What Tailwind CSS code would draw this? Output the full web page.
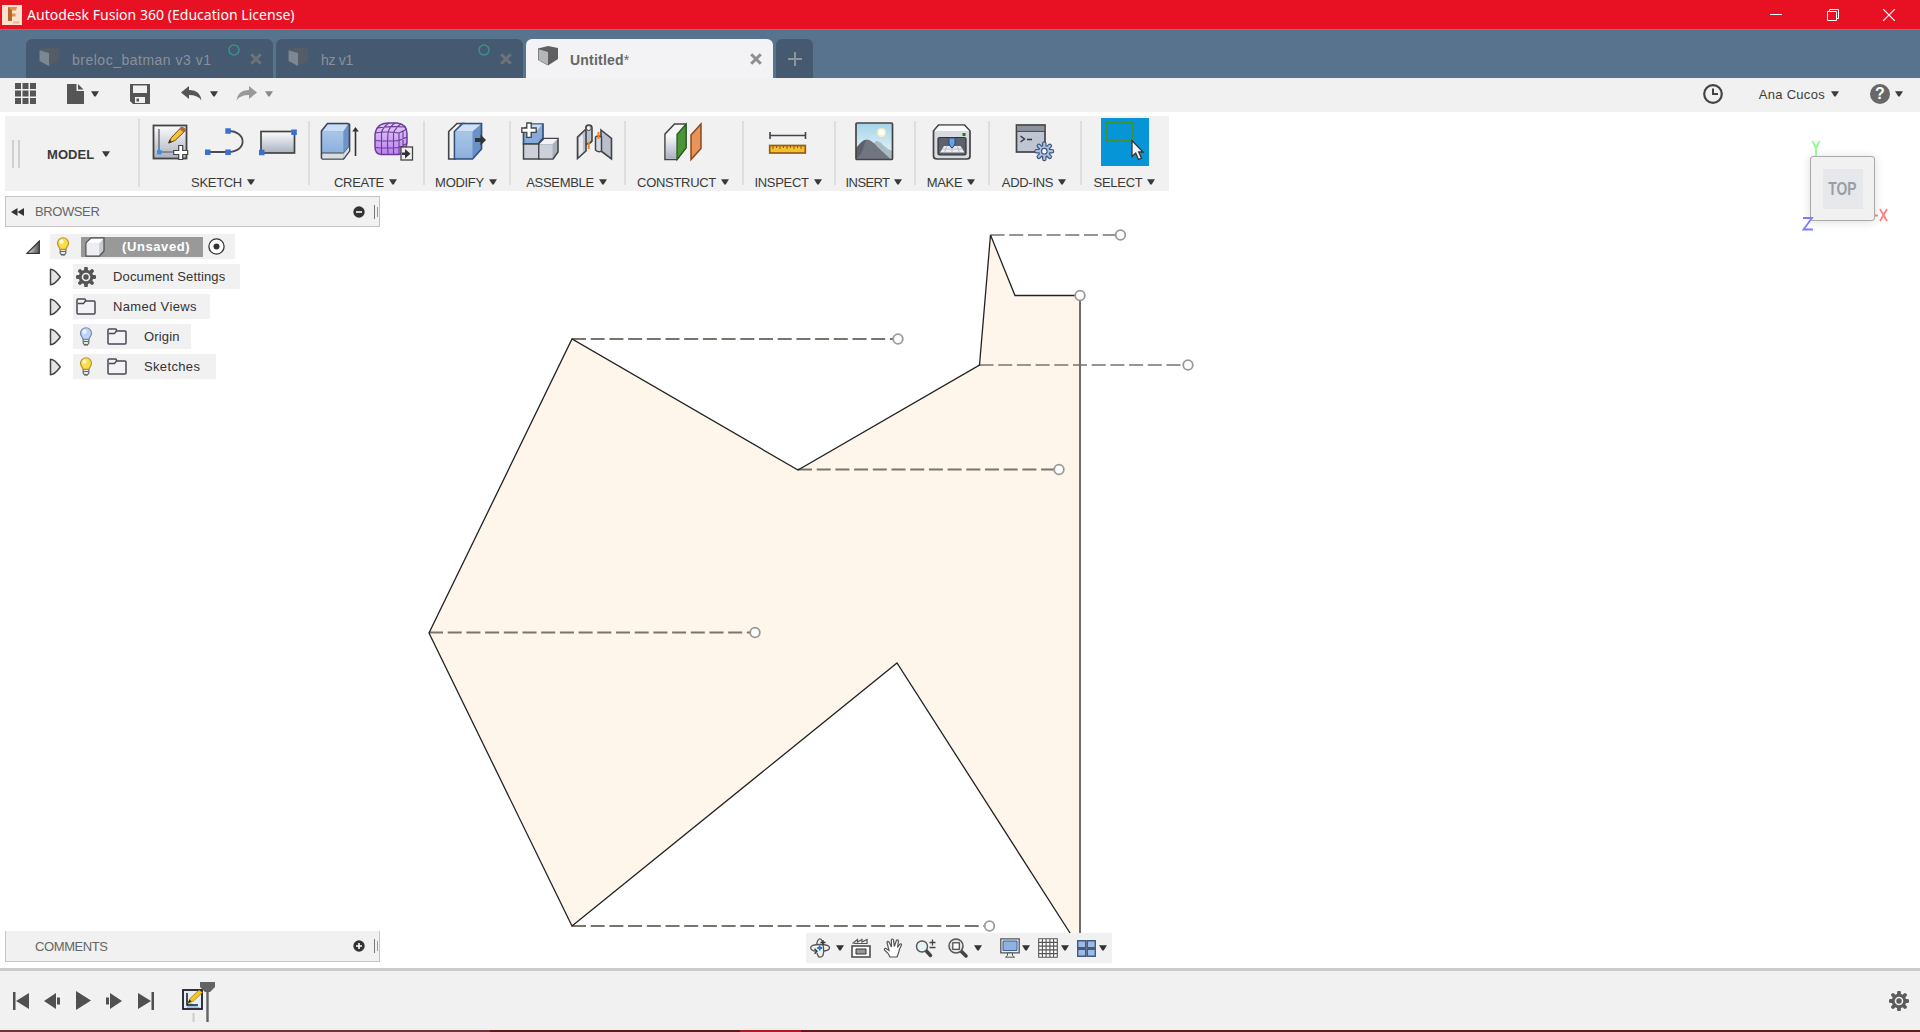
<!DOCTYPE html>
<html lang="en">
<head>
<meta charset="utf-8">
<title>Autodesk Fusion 360 (Education License)</title>
<script src="https://cdn.jsdelivr.net/npm/@tailwindcss/browser@4"></script>
</head>
<body class="w-[1920px] h-[1032px] overflow-hidden bg-white font-['Liberation_Sans',Arial,sans-serif] text-[13px] leading-none text-[#3c3c3c] flex flex-col">

<svg class="absolute w-0 h-0">
  <defs>
    <linearGradient id="silver" x1="0" y1="0" x2="0" y2="1"><stop offset="0" stop-color="#fdfdfd"/><stop offset="1" stop-color="#a9b0c0"/></linearGradient>
    <linearGradient id="blue" x1="0" y1="0" x2="0" y2="1"><stop offset="0" stop-color="#a9c6e8"/><stop offset="1" stop-color="#8db0dc"/></linearGradient>
    <linearGradient id="sky" x1="0" y1="0" x2="0" y2="1"><stop offset="0" stop-color="#a5d4ea"/><stop offset="1" stop-color="#eef6f8"/></linearGradient>
    <linearGradient id="violet" x1="0" y1="0" x2="0" y2="1"><stop offset="0" stop-color="#e3cdf8"/><stop offset="1" stop-color="#bb80f2"/></linearGradient>
    <linearGradient id="fade" x1="0" y1="0" x2="1" y2="0"><stop offset="0" stop-color="#e8e8e8"/><stop offset="1" stop-color="#555"/></linearGradient>
    <symbol id="caret" viewBox="0 0 8 6"><path d="M0 .3h8L4.700 5.600H3.300z" fill="currentColor"/></symbol>
    <symbol id="cross" viewBox="0 0 12 12"><path d="M1.200 1.200l9.600 9.600M10.800 1.200l-9.600 9.600" stroke="currentColor" stroke-width="3"/></symbol>
    <symbol id="cube" viewBox="0 0 20 20"><path d="M0 2.500L10 0l10 2v11l-10 6.500L0 14z" fill="var(--side)"/><path d="M.6 3.200L10 6v13L.6 14z" fill="var(--face)"/></symbol>
    <symbol id="gear" viewBox="0 0 20 20"><path d="M10 1.500v17M1.500 10h17M4 4l12 12M16 4L4 16" stroke="currentColor" stroke-width="3.800" stroke-linecap="round"/><circle cx="10" cy="10" r="5.800" fill="#f1f1f1" stroke="currentColor" stroke-width="3"/><circle cx="10" cy="10" r="2.700" fill="currentColor"/></symbol>
    <symbol id="bulb" viewBox="0 0 14 20"><path d="M4 12h6v5l-1.500 2h-3L4 17z" fill="#e6e6e6" stroke="#666" stroke-width="1.200"/><path d="M7 .8a5.800 5.800 0 0 1 5.800 5.700c0 3.200-2.300 4-2.800 6.500H4C3.500 10.500 1.200 9.700 1.200 6.500A5.800 5.800 0 0 1 7 .8z" fill="var(--glow)" stroke="var(--rim)" stroke-width="1.200"/><circle cx="5.500" cy="5" r="2.300" fill="#fff" fill-opacity=".75"/><path d="M4 15.300h6M5 18.500h4" stroke="#666" stroke-width="1.200"/></symbol>
    <symbol id="folder" viewBox="0 0 20 17"><path d="M1 15V2q0-1 1-1h6.500q1 0 1 1v1H18q1 0 1 1v11q0 1-1 1H2q-1 0-1-1z" fill="#f3f3f6" stroke="#454a55" stroke-width="1.500"/><path d="M2 5.500h5.500L9.500 3" fill="none" stroke="#454a55" stroke-width="1.300"/></symbol>
    <symbol id="twist" viewBox="0 0 13 18"><path d="M1.500 1.200q4 0 9.800 7.800-5.800 7.800-9.800 7.800z" fill="#e4e4e4" stroke="#444" stroke-width="1.500" stroke-linejoin="round"/></symbol>
  </defs>
</svg>

<!-- Title bar -->
<header class="h-[29px] shrink-0 bg-[#e81123] text-white flex items-center pl-[2px] pr-[25px]">
  <svg class="w-5 h-5" viewBox="0 0 20 20"><rect width="20" height="20" fill="#fbe3d0"/><path d="M6 2h9l-1 3.500h-4v3h3.500v3H10v4H6z" fill="#e0914a"/><path d="M6 2l4 3.500v10.500H6z" fill="#b4682a"/><path d="M11 17.500h6" stroke="#efb98a" stroke-width="2"/></svg>
  <span class="ml-[5px] font-['Noto_Sans','Open_Sans',sans-serif] text-[14px] tracking-[0.03px] whitespace-nowrap">Autodesk Fusion 360 (Education License)</span>
  <div class="ml-auto flex items-center gap-[44.500px]">
    <svg class="w-3 h-3" viewBox="0 0 12 12"><path d="M0 5.500h12" stroke="#fff"/></svg>
    <svg class="w-3 h-3" viewBox="0 0 12 12" fill="none" stroke="#fff"><path d="M.5 2.500h9v9h-9zM2.500 2.500v-2h9v9h-2"/></svg>
    <svg class="w-3 h-3" viewBox="0 0 12 12"><path d="M0 0l12 12M12 0L0 12" stroke="#fff" stroke-width="1.200"/></svg>
  </div>
</header>

<!-- Document tabs -->
<nav class="h-[49px] shrink-0 bg-[#57738d] border-t border-[#6b8299] flex items-end gap-[3px] pl-[26px] text-[14px] text-[#8a9199]">
  <div class="relative w-[247px] h-[39px] rounded-t-md bg-[#455a70] flex items-center pl-[13px] pr-[11px]">
    <svg class="w-5 h-5 -mt-1 [--side:#545c66] [--face:#7a8794]"><use href="#cube"/></svg>
    <span class="ml-[13px] mt-[2px] tracking-[0.5px]">breloc_batman v3 v1</span>
    <svg class="absolute left-[202px] top-[5px] w-3 h-3" viewBox="0 0 12 12"><circle cx="6" cy="6" r="5" fill="none" stroke="#3b8f8c" stroke-width="1.600"/></svg>
    <svg class="w-3 h-3 ml-auto text-[#6e7378]"><use href="#cross"/></svg>
  </div>
  <div class="relative w-[247px] h-[39px] rounded-t-md bg-[#455a70] flex items-center pl-[12px] pr-[11px]">
    <svg class="w-5 h-5 -mt-1 [--side:#545c66] [--face:#7a8794]"><use href="#cube"/></svg>
    <span class="ml-[13px] mt-[2px] tracking-[-0.3px]">hz v1</span>
    <svg class="absolute left-[202px] top-[5px] w-3 h-3" viewBox="0 0 12 12"><circle cx="6" cy="6" r="5" fill="none" stroke="#3b8f8c" stroke-width="1.600"/></svg>
    <svg class="w-3 h-3 ml-auto text-[#6e7378]"><use href="#cross"/></svg>
  </div>
  <div class="w-[247px] h-[39px] rounded-t-md bg-[#f3f3f5] flex items-center pl-[12px] pr-[11px]">
    <svg class="w-5 h-5 -mt-1.5 [--side:#5f5f5f] [--face:#b4b7ba]"><use href="#cube"/></svg>
    <span class="ml-[12px] mt-[2px] font-bold text-[#666] tracking-[0.2px]">Untitled<span class="font-normal">*</span></span>
    <svg class="w-3 h-3 ml-auto text-[#8f8f8f]"><use href="#cross"/></svg>
  </div>
  <div class="w-[37px] h-[39px] rounded-t-md bg-[#455a70] flex items-center justify-center">
    <svg class="w-[14px] h-[14px]" viewBox="0 0 14 14"><path d="M7 0v14M0 7h14" stroke="#8d949b" stroke-width="2"/></svg>
  </div>
</nav>

<!-- Quick access bar -->
<div class="h-[34px] shrink-0 bg-[#f1f1f1] flex items-center pl-[15px] pr-[17px] pb-[3px]">
  <svg class="w-[21px] h-[21px]" viewBox="0 0 21 21"><path d="M0 0h6v6H0zM7.500 0h6v6h-6zM15 0h6v6h-6zM0 7.500h6v6H0zM7.500 7.500h6v6h-6zM15 7.500h6v6h-6zM0 15h6v6H0zM7.500 15h6v6h-6zM15 15h6v6h-6z" fill="#555"/></svg>
  <svg class="w-[17px] h-5 ml-[31px]" viewBox="0 0 17 20"><path d="M0 0h9.500v7H17v13H0z" fill="#555"/><path d="M11 0l5.500 5.500H11z" fill="#555"/></svg>
  <svg class="w-2 h-[6px] ml-[7px]"><use href="#caret"/></svg>
  <svg class="w-5 h-5 ml-[31px]" viewBox="0 0 20 20"><path d="M0 0h20v20H3l-3-3z" fill="#555"/><path d="M3 1.500h14V9H3z" fill="#f1f1f1"/><path d="M5 13h10v6H5z" fill="#f1f1f1"/><path d="M6.500 14.500h2.500v3H6.500z" fill="#555"/></svg>
  <svg class="w-[21px] h-[15px] ml-[31px] text-[#555]" viewBox="0 0 21 15"><path d="M0 6.500L8 0v4q11-.5 12.500 10.500Q17 9 8 9v4z" fill="currentColor"/></svg>
  <svg class="w-2 h-[6px] ml-[8px]"><use href="#caret"/></svg>
  <svg class="w-[21px] h-[15px] ml-[18px] text-[#999]" viewBox="0 0 21 15"><path d="M21 6.500L13 0v4Q2 3.500.5 14.500 4 9 13 9v4z" fill="currentColor"/></svg>
  <svg class="w-2 h-[6px] ml-[8px] text-[#8a8a8a]"><use href="#caret"/></svg>
  <svg class="w-5 h-5 ml-auto" viewBox="0 0 20 20"><circle cx="10" cy="10" r="8.800" fill="none" stroke="#444" stroke-width="2.200"/><path d="M10 4.500V10h5" fill="none" stroke="#444" stroke-width="2"/></svg>
  <span class="ml-9 mt-[1px] tracking-[0.3px]">Ana Cucos</span>
  <svg class="w-2 h-[6px] ml-[6px]"><use href="#caret"/></svg>
  <div class="ml-[31px] w-5 h-5 rounded-full bg-[#686868] text-white font-bold text-[16px] flex items-center justify-center">?</div>
  <svg class="w-2 h-[6px] ml-[5px]"><use href="#caret"/></svg>
</div>

<!-- Modeling workspace -->
<main class="relative h-[856px] shrink-0 bg-white">
  <svg class="absolute inset-0 w-full h-full" viewBox="0 112 1920 856">
    <path d="M572 339L798 470 979.500 365 990.500 235 1015 295.500H1080V940H1075L897 663 572 926 429 633z" fill="#fff6eb"/>
    <g stroke="#78756f" stroke-width="2" stroke-dasharray="14 4.700" fill="none">
      <path d="M572 339H893M798 469.500H1054M429 632.500H750M572 926H984"/>
      <path d="M990.500 235H1115M979.500 365H1182" stroke="#989490"/>
    </g>
    <path d="M1080 301V940" stroke="#6f6c69" stroke-width="2"/>
    <path d="M1074.500 940L897 663 572 926 429 633 572 339 798 470 979.500 365 990.500 235 1015 295.500H1075" fill="none" stroke="#222" stroke-width="1.300"/>
    <g fill="#fff" stroke="#999" stroke-width="1.800">
      <circle cx="1120.500" cy="235" r="4.800"/><circle cx="1080" cy="295.500" r="4.800"/><circle cx="1188" cy="365" r="4.800"/><circle cx="898" cy="339" r="4.800"/><circle cx="1059" cy="469.500" r="4.800"/><circle cx="755" cy="632.500" r="4.800"/><circle cx="989.500" cy="926" r="4.800"/>
    </g>
  </svg>

  <!-- View cube -->
  <div class="absolute left-[1810px] top-[44px] w-[65px] h-[65px] rounded-[3px] border-[1.500px] border-[#a9a9a9] bg-[#f1f1f1] shadow-[0_1px_10px_rgba(0,0,0,0.14)] flex items-center justify-center">
    <div class="w-10 h-10 bg-[#e6e8ec] flex items-center justify-center font-bold text-[#9a9ea6]"><span class="scale-x-[0.77] text-[18px]">TOP</span></div>
  </div>
  <svg class="absolute left-[1799px] top-[26px] w-[92px] h-[108px]" viewBox="0 0 92 108" fill="none" stroke-width="1.800">
    <path d="M13.500 3l3.500 7 3.500-7M17 10v8" stroke="#8dfb8d"/>
    <path d="M4 80h9L4.500 91.500H14" stroke="#7b7bff"/>
    <path d="M81 71l7 12M88 71l-7 12M76 77.500h3" stroke="#ff8080"/>
  </svg>

  <!-- Ribbon -->
  <section class="relative h-[79px] pt-1 pl-[5px] flex text-[#3a3a3a]">
    <div class="h-[75px] bg-[#f1f1f1] flex items-start tracking-[-0.3px]">
      <div class="w-[133px] h-[75px] flex items-center pl-[7px]">
        <div class="flex gap-1"><i class="w-[2px] h-7 bg-[#d0d0d0]"></i><i class="w-[2px] h-7 bg-[#d0d0d0]"></i></div>
        <span class="ml-[27px] mt-[1px] font-bold tracking-[0.05px]">MODEL</span>
        <svg class="w-2 h-[6px] ml-[8px]"><use href="#caret"/></svg>
      </div>
      <i class="w-[2px] h-[68px] mt-[3px] -mr-[2px] bg-[#dedede]"></i>

      <div class="w-[170px] pt-[2px] flex flex-col items-center">
        <div class="flex gap-[6px] translate-x-[1px]">
          <svg class="size-12" viewBox="0 0 48 48"><rect x="7.500" y="7.500" width="33" height="33" fill="url(#silver)" stroke="#444" stroke-width="1.800"/><path d="M13 11v23h18" fill="none" stroke="#555" stroke-width="1.200"/><rect x="11" y="32" width="4.500" height="4.500" fill="#3b8fe8"/><path d="M23 25l2-5L35.500 9l4 3.500L29 22.500z" fill="#f8c332" stroke="#6b4a18"/><path d="M33.500 11l4 3.500 2.500-2.500q-1-3.500-4.500-3z" fill="#a86a48"/><path d="M22 25.500l1.500-4 2.500 2.500z" fill="#333"/><path d="M32.700 27.500h4v5h5v4h-5v5h-4v-5h-5v-4h5z" fill="#fff" stroke="#444" stroke-width="1.200"/></svg>
          <svg class="size-12" viewBox="0 0 48 48"><path d="M7.500 34H28c19.500 0 19.500-21 0-21" fill="none" stroke="#4c4c4c" stroke-width="1.800"/><path d="M5 31.500h5.500V37H5zM25.300 31.500h5.500V37h-5.500zM25.300 10.300h5.500v5.500h-5.500z" fill="#3a6fd0"/></svg>
          <svg class="size-12" viewBox="0 0 48 48"><rect x="7" y="13.500" width="33.500" height="21.500" fill="url(#silver)" stroke="#444" stroke-width="1.700"/><path d="M37.300 11.500h5.500V17h-5.500zM5 31.800h5.500v5.500H5z" fill="#3a6fd0"/></svg>
        </div>
        <div class="flex items-center gap-[5px] mt-[10px]"><span>SKETCH</span><svg class="w-2 h-[6px] -mt-0.5"><use href="#caret"/></svg></div>
      </div>
      <i class="w-[2px] h-[64px] mt-[5px] -mr-[2px] bg-[#dedede]"></i>

      <div class="w-[115px] pt-[2px] flex flex-col items-center">
        <div class="flex gap-[6px]">
          <svg class="size-12" viewBox="0 0 48 48"><path d="M6.500 13l6-7.500h20.500l1.500 1V33l-6 8H7.500l-1-1z" fill="#6e93c6" stroke="#3d4656" stroke-width="1.700"/><path d="M7.300 13.500l5.500-7h20l-4.500 7z" fill="#c9def2"/><path d="M7.300 13.500h21V34h-21z" fill="url(#blue)"/><path d="M7.300 35.500h21v5h-21zM28.500 35.500l5.500-7v4.500l-5.500 7z" fill="#ddd"/><path d="M7 35h21.500l6-7" fill="none" stroke="#555" stroke-width=".8"/><path d="M40.500 38V11" stroke="#333" stroke-width="1.600"/><path d="M37.200 13.500l3.300-4.500 3.300 4.500z" fill="#333"/></svg>
          <svg class="size-12" viewBox="0 0 48 48"><path d="M6 17Q7 5 20 5h8q10 1 10 11v9q-1 9-8 11.500H12Q6 36 6 29z" fill="url(#violet)" stroke="#6b3d94" stroke-width="1.500"/><path d="M6 15q11-2 24 0v21M30 15l8-4M12.500 14.500V36M19 14.500q-1 11 0 22M24.500 14.500V36M6 22.500q12 1 24 0l8-3.500M6 29.500q12 1 24 0l8-4M12.500 14.500Q14 9 20 5M19 14.500Q21 8 26 5M24.500 15Q27 9 32 6M8 10q14-2 28-1M34 13v20" fill="none" stroke="#6b3d94" stroke-width="1.100"/><rect x="32" y="29" width="11.500" height="13" fill="#f1f1f1" stroke="#444" stroke-width="1.300"/><path d="M33 34.500h3V31l5.500 4.700L36 40.500V37h-3z" fill="#333"/></svg>
        </div>
        <div class="flex items-center gap-[5px] mt-[10px]"><span>CREATE</span><svg class="w-2 h-[6px] -mt-0.5"><use href="#caret"/></svg></div>
      </div>
      <i class="w-[2px] h-[64px] mt-[5px] -mr-[2px] bg-[#dedede]"></i>

      <div class="w-[86px] pt-[2px] flex flex-col items-center">
        <svg class="size-12" viewBox="0 0 48 48"><path d="M6.700 13.500L15 5.500h6l-8 8v27.500H6.700z" fill="#f2f2f2" stroke="#444" stroke-width="1.600"/><path d="M12.500 13.500l8-8h19V31l-9 10h-18z" fill="#6b92c8" stroke="#35507c" stroke-width="1.700"/><path d="M13.500 13.500L21 6.500h17.500l-8 7z" fill="#cfe2f4"/><path d="M13.300 13.500h17.200V40H13.300z" fill="url(#blue)"/><path d="M33 20h5.500v-3.500L44 22l-5.500 5.500V24H33z" fill="#333"/></svg>
        <div class="flex items-center gap-[5px] mt-[10px]"><span>MODIFY</span><svg class="w-2 h-[6px] -mt-0.5"><use href="#caret"/></svg></div>
      </div>
      <i class="w-[2px] h-[64px] mt-[5px] -mr-[2px] bg-[#dedede]"></i>

      <div class="w-[115px] pt-[2px] flex flex-col items-center">
        <div class="flex gap-[6px]">
          <svg class="size-12" viewBox="0 0 48 48"><path d="M7.500 12l6-6h13.500v14l-5 6H7.500z" fill="#86abd9" stroke="#35507c" stroke-width="1.700"/><path d="M8 12l6-5.500h12l-4.500 5.500z" fill="#c9def2"/><path d="M7.500 26h15.500v15H7.500z" fill="#ccd0d8" stroke="#444" stroke-width="1.500"/><path d="M23 26l5-5.500h14V34l-5 7H23z" fill="#a9b0bd" stroke="#444" stroke-width="1.600"/><path d="M23.500 26l5-5h13l-5 5z" fill="#f1f3f5"/><path d="M23.500 26.500H36.500V40.300H23.500z" fill="#ccd0d8"/><path d="M10.800 5h4.400v5h5v4.400h-5v5h-4.400v-5h-5V10h5z" fill="#fff" stroke="#444" stroke-width="1.300"/></svg>
          <svg class="size-12" viewBox="0 0 48 48"><path d="M7.500 19l8.500-8v22l-8.500 7.500zM16 11q-1-4 3-4 3 0 3 3v13q-2 3-6 3z" fill="#b9c0cb" stroke="#444" stroke-width="1.600"/><path d="M9 20l4-4v18l-4 4z" fill="#e6e9ee"/><circle cx="18.700" cy="10" r="2.500" fill="#eee" stroke="#444"/><path d="M31 12l10.500 8.500V41L31 33z" fill="#b9c0cb" stroke="#444" stroke-width="1.600"/><path d="M25.500 19q2.500-2 6 0v14q-3 2-6-1z" fill="#d5d9e0" stroke="#444" stroke-width="1.500"/><path d="M18.700 24v7M28.500 14v7" stroke="#f08020" stroke-width="2"/></svg>
        </div>
        <div class="flex items-center gap-[5px] mt-[10px]"><span>ASSEMBLE</span><svg class="w-2 h-[6px] -mt-0.5"><use href="#caret"/></svg></div>
      </div>
      <i class="w-[2px] h-[64px] mt-[5px] -mr-[2px] bg-[#dedede]"></i>

      <div class="w-[118px] pt-[2px] flex flex-col items-center">
        <svg class="size-12" viewBox="0 0 48 48"><path d="M6 16L15.500 6H27v23.500L18 41.500H6z" fill="#f6f6f8" stroke="#444" stroke-width="1.600"/><path d="M6.800 16.500H18V40.700H6.800z" fill="url(#silver)"/><path d="M18 16.500L27 6v24l-9 11.500z" fill="#4c9438" stroke="#2c5f20" stroke-width="1.300"/><path d="M32 17L42 6v24.500L32 41.500z" fill="#e8935a" stroke="#8c4a1c" stroke-width="1.500"/></svg>
        <div class="flex items-center gap-[5px] mt-[10px]"><span>CONSTRUCT</span><svg class="w-2 h-[6px] -mt-0.5"><use href="#caret"/></svg></div>
      </div>
      <i class="w-[2px] h-[64px] mt-[5px] -mr-[2px] bg-[#dedede]"></i>

      <div class="w-[92px] pt-[2px] flex flex-col items-center">
        <svg class="size-12" viewBox="0 0 48 48"><path d="M6 14v7M41.500 14v7M6 17.500h35.500" stroke="#444" stroke-width="1.600"/><rect x="5.700" y="27.500" width="35.600" height="7.500" fill="#f2c02e" stroke="#9a5a10" stroke-width="1.700"/><path d="M9 28v3M12.500 28v2M16 28v3M19.500 28v2M23 28v3M26.500 28v2M30 28v3M33.500 28v2M37 28v3" stroke="#8a5a10"/></svg>
        <div class="flex items-center gap-[5px] mt-[10px]"><span>INSPECT</span><svg class="w-2 h-[6px] -mt-0.5"><use href="#caret"/></svg></div>
      </div>
      <i class="w-[2px] h-[64px] mt-[5px] -mr-[2px] bg-[#dedede]"></i>

      <div class="w-[80px] pt-[2px] flex flex-col items-center">
        <svg class="size-12" viewBox="0 0 48 48"><rect x="6" y="5" width="36.500" height="36.500" fill="url(#sky)"/><circle cx="31.500" cy="14.500" r="4.500" fill="#fdf3b8"/><circle cx="31.500" cy="14.500" r="2.800" fill="#fff"/><path d="M6 36q14-5 20-13 4 0 7 4 4 4 9.500 6v9H6z" fill="#a9bcc6"/><path d="M6 30q6-8 10.500-8.500 5 0 11 7.500L41 41.500H6z" fill="#70757f"/><path d="M6 31q6-9 10-9l-2 6-3 8-5 5z" fill="#5b606b"/><rect x="6" y="5" width="36.500" height="36.500" rx="1" fill="none" stroke="#444" stroke-width="1.700"/></svg>
        <div class="flex items-center gap-[5px] mt-[10px] tracking-[-0.6px]"><span>INSERT</span><svg class="w-2 h-[6px] -mt-0.5"><use href="#caret"/></svg></div>
      </div>
      <i class="w-[2px] h-[64px] mt-[5px] -mr-[2px] bg-[#dedede]"></i>

      <div class="w-[74px] pt-[2px] flex flex-col items-center">
        <svg class="size-12" viewBox="0 0 48 48"><path d="M6.500 13l5-6h26l5.500 6v25q0 3-3 3h-30q-3.500 0-3.500-3z" fill="#d9dbe0" stroke="#444" stroke-width="1.700"/><path d="M7.500 13l4.500-5.200h25L42 13z" fill="#fafafa"/><rect x="35.500" y="15" width="3" height="3" fill="#118a11"/><rect x="11" y="19.500" width="28" height="17.500" rx="1.500" fill="#5d626c" stroke="#333" stroke-width="1.200"/><path d="M17 28h16.500l4 6.500H13z" fill="#eceef0"/><path d="M15 31h20.500M20 28l-2.500 6.500M25 28v6.500M30 28l2.500 6.500" stroke="#aab" stroke-width=".7"/><path d="M22 20h6v6l-2 3.500h-2L22 26z" fill="#6aa3e4" stroke="#234a86"/></svg>
        <div class="flex items-center gap-[5px] mt-[10px]"><span>MAKE</span><svg class="w-2 h-[6px] -mt-0.5"><use href="#caret"/></svg></div>
      </div>
      <i class="w-[2px] h-[64px] mt-[5px] -mr-[2px] bg-[#dedede]"></i>

      <div class="w-[92px] pt-[2px] flex flex-col items-center">
        <svg class="size-12" viewBox="0 0 48 48"><rect x="6.500" y="7" width="28.500" height="27" fill="#bfc5d2" stroke="#444" stroke-width="1.700"/><path d="M7.300 8h27v4.500h-27z" fill="#8d939e"/><path d="M7 13.300h28" stroke="#444" stroke-width="1.200"/><path d="M10.500 18l4 3-4 3M17 21.500h5" fill="none" stroke="#333" stroke-width="1.400"/><path d="M34.300 25.500v15.500M26.500 33.200h15.500M28.800 27.800l11 11M39.800 27.800l-11 11" stroke="#3f5678" stroke-width="4.500" stroke-linecap="round"/><path d="M34.300 25.500v15.500M26.500 33.200h15.500M28.800 27.800l11 11M39.800 27.800l-11 11" stroke="#a9c4e8" stroke-width="2.200" stroke-linecap="round"/><circle cx="34.300" cy="33.200" r="5" fill="#a9c4e8"/><circle cx="34.300" cy="33.200" r="2.800" fill="#fff" stroke="#3f5678" stroke-width="1.200"/></svg>
        <div class="flex items-center gap-[5px] mt-[10px]"><span>ADD-INS</span><svg class="w-2 h-[6px] -mt-0.5"><use href="#caret"/></svg></div>
      </div>
      <i class="w-[2px] h-[64px] mt-[5px] -mr-[2px] bg-[#dedede]"></i>

      <div class="w-[89px] pt-[2px] flex flex-col items-center">
        <svg class="size-12 bg-[#0696d7]" viewBox="0 0 48 48"><rect x="6" y="5" width="25.500" height="17.500" fill="none" stroke="#3f9238" stroke-width="2"/><path d="M31 22.500v16l3.700-3.500 2.800 6.500 3-1.300-2.800-6.200H42z" fill="#f4f4f4" stroke="#333" stroke-width="1.300"/></svg>
        <div class="flex items-center gap-[5px] mt-[10px]"><span>SELECT</span><svg class="w-2 h-[6px] -mt-0.5"><use href="#caret"/></svg></div>
      </div>
    </div>
  </section>

  <!-- Browser panel -->
  <section class="relative ml-[5px] mt-[5px] w-[375px] h-[31px] bg-[#f1f1f1] border border-[#c4c4c4] flex items-center pl-[5px]">
    <svg class="w-[13px] h-2" viewBox="0 0 13 8"><path d="M6.500 0v8L0 4zM13 0v8L6.500 4z" fill="#333"/></svg>
    <span class="ml-[11px] -mt-px text-[#666] tracking-[-0.4px]">BROWSER</span>
    <svg class="w-3 h-3 ml-auto" viewBox="0 0 12 12"><circle cx="6" cy="6" r="5.700" fill="#333"/><path d="M3 6h6" stroke="#fff" stroke-width="1.600"/></svg>
    <i class="ml-[9px] w-px h-[14px] bg-[#777]"></i><i class="ml-[2px] mr-px w-px h-[10px] bg-[#999]"></i>
  </section>

  <div class="relative mt-[7px] flex flex-col items-start gap-[5px] tracking-[0.15px] text-[#333]">
    <div class="flex items-center h-[25px] pl-[26px]">
      <svg class="w-[14px] h-[14px] mr-[10px]" viewBox="0 0 14 14"><path d="M13.300 1v12.300H1z" fill="url(#fade)" stroke="#333" stroke-width="1.200"/></svg>
      <div class="flex items-center w-[185px] h-[25px] bg-[#f1f1f1] pl-[6px]">
        <svg class="w-[14px] h-[19px] [--glow:#fbdc4a] [--rim:#b59420]"><use href="#bulb"/></svg>
        <div class="ml-[11px] w-[122px] h-5 bg-[#999] flex items-center pl-1 text-white font-bold">
          <svg class="w-5 h-5" viewBox="0 0 20 20"><path d="M1 6l5-5h13v13l-4.500 5H1z" fill="#c9ccd4" stroke="#555" stroke-width="1.300"/><path d="M1.700 6.300L6.300 1.700h12L14.500 6.300z" fill="#fff"/><path d="M1.700 6.300h12.500v12H1.700z" fill="#eeeff3"/></svg>
          <span class="ml-[17px] tracking-[0.6px]">(Unsaved)</span>
        </div>
        <svg class="ml-[5px] w-[17px] h-[17px]" viewBox="0 0 17 17"><circle cx="8.500" cy="8.500" r="7.600" fill="#fff" stroke="#333" stroke-width="1.300"/><circle cx="8.500" cy="8.500" r="3" fill="#333"/></svg>
      </div>
    </div>
    <div class="flex items-center h-[25px] pl-[49px]">
      <svg class="w-[13px] h-[18px] mr-[11px]"><use href="#twist"/></svg>
      <div class="flex items-center w-[167px] h-[25px] bg-[#f1f1f1] pl-[3px]"><svg class="w-5 h-5 text-[#555]"><use href="#gear"/></svg><span class="ml-[17px]">Document Settings</span></div>
    </div>
    <div class="flex items-center h-[25px] pl-[49px]">
      <svg class="w-[13px] h-[18px] mr-[11px]"><use href="#twist"/></svg>
      <div class="flex items-center w-[137px] h-[25px] bg-[#f1f1f1] pl-[3px]"><svg class="w-5 h-[17px]"><use href="#folder"/></svg><span class="ml-[17px] tracking-[0.35px]">Named Views</span></div>
    </div>
    <div class="flex items-center h-[25px] pl-[49px]">
      <svg class="w-[13px] h-[18px] mr-[11px]"><use href="#twist"/></svg>
      <div class="flex items-center w-[118px] h-[25px] bg-[#f1f1f1] pl-[6px]"><svg class="w-[14px] h-[19px] [--glow:#bcd4f8] [--rim:#7088b4]"><use href="#bulb"/></svg><svg class="w-5 h-[17px] ml-[14px]"><use href="#folder"/></svg><span class="ml-[17px]">Origin</span></div>
    </div>
    <div class="flex items-center h-[25px] pl-[49px]">
      <svg class="w-[13px] h-[18px] mr-[11px]"><use href="#twist"/></svg>
      <div class="flex items-center w-[143px] h-[25px] bg-[#f1f1f1] pl-[6px]"><svg class="w-[14px] h-[19px] [--glow:#fbdc4a] [--rim:#b59420]"><use href="#bulb"/></svg><svg class="w-5 h-[17px] ml-[14px]"><use href="#folder"/></svg><span class="ml-[17px] tracking-[0.35px]">Sketches</span></div>
    </div>
  </div>

  <!-- Comments panel -->
  <section class="absolute left-[5px] bottom-[6px] w-[375px] h-[31px] bg-[#f1f1f1] border border-t-0 border-[#c4c4c4] flex items-center pl-[29px]">
    <span class="text-[#666] tracking-[-0.4px]">COMMENTS</span>
    <svg class="w-3 h-3 ml-auto" viewBox="0 0 12 12"><circle cx="6" cy="6" r="5.700" fill="#333"/><path d="M3 6h6M6 3v6" stroke="#fff" stroke-width="1.600"/></svg>
    <i class="ml-[9px] w-px h-[14px] bg-[#777]"></i><i class="ml-[2px] mr-px w-px h-[10px] bg-[#999]"></i>
  </section>

  <!-- Navigation bar -->
  <div class="absolute left-[806px] bottom-[5px] w-[306px] h-[30px] bg-[#f1f1f1] flex items-center pl-[4px] text-[#333]">
    <svg class="w-5 h-5" viewBox="0 0 20 20" fill="none" stroke="#555" stroke-width="1.300"><path d="M13 13Q19.500 12.500 19.500 9.700 19.500 6.500 10 6.500T.7 9.700q0 3 5.500 3.500"/><path d="M6.500 7Q7.500.8 10 .8T13.500 10 10 19.200Q8 19.200 7 15"/><path d="M4.500 10.800l2.500 2.400-2.500 2.500M10.500 4.500h5M13 2v5" stroke="#333"/><path d="M9.700 7.500v5M7.200 10h5" stroke="#1878e0" stroke-width="1.800"/></svg>
    <svg class="w-2 h-[6px] ml-[6px]"><use href="#caret"/></svg>
    <svg class="w-5 h-5 ml-[7px]" viewBox="0 0 20 20"><path d="M1 8h18v11H1z" fill="#fff" stroke="#444" stroke-width="1.500"/><path d="M5 11h10v5H5z" fill="#9a9a9a" stroke="#333"/><path d="M1.500 5.500l5-4v2.500L11 1.500V4l5-2.500v4H3" fill="none" stroke="#555" stroke-width="1.200"/></svg>
    <svg class="w-5 h-5 ml-[12px]" viewBox="0 0 20 20"><path d="M7 19Q5.500 15 1.500 12q-.5-2 1.500-1.500l3 2L4 4.500q.5-2 2-.5l2.500 5L8.300 2q1-2 2.200 0l.8 6.500L13.500 2.300q1.500-1.200 2 .5L14.500 9.500l2.500-3.500q1.800-.5 1.500 1-2.500 4.500-3 8L14 19z" fill="#fff" stroke="#555" stroke-width="1.200"/></svg>
    <svg class="w-[21px] h-5 ml-[12px]" viewBox="0 0 21 20"><path d="M10.500 12l5 5.500" stroke="#444" stroke-width="3.500" stroke-linecap="round"/><circle cx="7" cy="8.500" r="5.500" fill="#e6f2f4" stroke="#555" stroke-width="1.400"/><path d="M14.500 4.500h6M17.500 1.500v6M14.500 9.500h6" stroke="#444" stroke-width="1.300"/></svg>
    <svg class="w-5 h-5 ml-[12px]" viewBox="0 0 20 20"><path d="M13 13l5 5" stroke="#444" stroke-width="3.500" stroke-linecap="round"/><circle cx="8" cy="8" r="7" fill="#dfe6ea" stroke="#555" stroke-width="1.500"/><rect x="4.800" y="4.800" width="6.500" height="6.500" fill="#fff" stroke="#444" stroke-width="1.200"/></svg>
    <svg class="w-2 h-[6px] ml-[6px]"><use href="#caret"/></svg>
    <svg class="w-5 h-5 ml-[18px]" viewBox="0 0 20 20"><path d="M.8.800h18.400v14H.8z" fill="#eee" stroke="#555" stroke-width="1.300"/><path d="M3 3h14v9.500H3z" fill="#8fb3e0" stroke="#3a5f9a"/><path d="M7.500 15h5v2.500l2 1.700h-9l2-1.700z" fill="#eee" stroke="#555"/></svg>
    <svg class="w-2 h-[6px] ml-[2px]"><use href="#caret"/></svg>
    <svg class="w-5 h-5 ml-[8px]" viewBox="0 0 20 20"><path d="M.7.700h18.600v18.600H.7zM4.400.7v18.600M8.100.7v18.600M11.900.7v18.600M15.600.7v18.600M.7 4.400h18.600M.7 8.100h18.600M.7 11.900h18.600M.7 15.600h18.600" fill="#fff" stroke="#555" stroke-width="1.100"/></svg>
    <svg class="w-2 h-[6px] ml-[3px]"><use href="#caret"/></svg>
    <svg class="w-[19px] h-[17px] ml-[8px]" viewBox="0 0 19 17"><path d="M.7.700h8v7h-8zM10.300.7h8v7h-8zM.7 9.300h8v7h-8zM10.300 9.300h8v7h-8z" fill="#9cbbe4" stroke="#445a80" stroke-width="1.400"/></svg>
    <svg class="w-2 h-[6px] ml-[3px]"><use href="#caret"/></svg>
  </div>
</main>

<!-- Timeline -->
<footer class="h-[62px] shrink-0 bg-[#f1f1f1] border-t-[3px] border-[#cbcdcd] flex items-center pl-[13px] pr-[11px] text-[#505050]">
  <svg class="w-4 h-[18px]" viewBox="0 0 16 18"><path d="M0 0h2.500v18H0zM16 1v16L3 9z" fill="currentColor"/></svg>
  <svg class="w-4 h-4 ml-[15px]" viewBox="0 0 16 16"><path d="M12 0v16L0 8zM13 4.500h3v7h-3z" fill="currentColor"/></svg>
  <svg class="w-[15px] h-[19px] ml-4" viewBox="0 0 15 19"><path d="M0 0v19l15-9.500z" fill="currentColor"/></svg>
  <svg class="w-4 h-4 ml-[15px]" viewBox="0 0 16 16"><path d="M4 0v16l12-8zM0 4.500h3v7H0z" fill="currentColor"/></svg>
  <svg class="w-4 h-[18px] ml-4" viewBox="0 0 16 18"><path d="M13.500 0H16v18h-2.500zM0 1v16l13-8z" fill="currentColor"/></svg>
  <svg class="w-[34px] h-[42px] ml-7 mt-[2px]" viewBox="182 981 34 42"><rect x="183" y="990" width="19" height="19" fill="#e4eef8" stroke="#1c1c2c" stroke-width="1.800"/><path d="M187 1001l14 7h-14z" fill="#9cc4ea"/><path d="M187 993v12h11" fill="none" stroke="#222" stroke-width="1.600"/><path d="M188 1003l2-4.500 9-8.500 3.500 2.500-9 8.500z" fill="#fbc41c" stroke="#8a6410" stroke-width=".6"/><path d="M188 1003l1.500-3.500 2 2z" fill="#222"/><path d="M192.500 1013h2v9h-2z" fill="#ccc"/><path d="M200 982h15v5l-5 5h-1.300v30h-2.400v-30H205l-5-5z" fill="#636363"/></svg>
  <svg class="w-5 h-5 ml-auto text-[#5c5c5c]"><use href="#gear"/></svg>
</footer>
<div class="h-[2px] shrink-0 flex"><i class="w-[490px] bg-[#6f3036]"></i><i class="w-[250px] bg-[#5d1a1c]"></i><i class="w-[61px] bg-[#b01c26]"></i><i class="flex-1 bg-[#5f1a20]"></i></div>

</body>
</html>
